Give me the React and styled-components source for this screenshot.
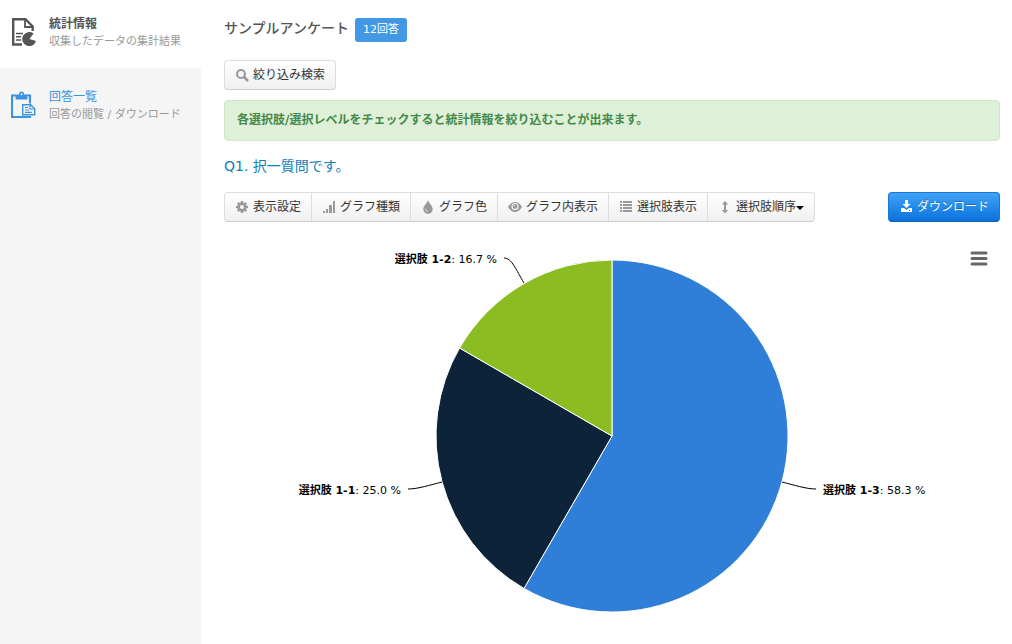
import React from "react";
import styled, { createGlobalStyle, css } from "styled-components";

const GlobalStyle = createGlobalStyle`
  * {
    box-sizing: border-box;
  }
  body {
    margin: 0;
    background: #fff;
    color: #333;
    font-family: "DejaVu Sans", "Noto Sans CJK JP", sans-serif;
    font-size: 12px;
    line-height: 20px;
  }
`;

// グラフのデータ
const slices = [
  {
    name: "選択肢 1-3",
    value: 58.3,
    from: 0,
    to: 210,
    color: "#2f7ed8",
    line: "M558 246 C570 249 582 253 592 253",
    x: 599,
    y: 258,
    anchor: "start",
  },
  {
    name: "選択肢 1-1",
    value: 25,
    from: 210,
    to: 300,
    color: "#0d233a",
    line: "M184 253 C194 253 206 249 218 246",
    x: 177,
    y: 258,
    anchor: "end",
  },
  {
    name: "選択肢 1-2",
    value: 16.7,
    from: 300,
    to: 360,
    color: "#8bbc21",
    line: "M280 22 C288 22 292 34 300 47",
    x: 273,
    y: 27,
    anchor: "end",
  },
];

const CENTER = { x: 388, y: 200 };
const RADIUS = 176;

const pointAt = (deg) => {
  const rad = (deg * Math.PI) / 180;
  return `${CENTER.x + RADIUS * Math.sin(rad)} ${CENTER.y - RADIUS * Math.cos(rad)}`;
};

const slicePath = ({ from, to }) =>
  `M${CENTER.x} ${CENTER.y} L${pointAt(from)} A${RADIUS} ${RADIUS} 0 ${
    to - from > 180 ? 1 : 0
  } 1 ${pointAt(to)} Z`;

// アイコン (14 x 14)
const icons = {
  search: (
    <>
      <circle cx="6" cy="6" r="4" fill="none" stroke="currentColor" strokeWidth="2" />
      <path d="M9 9l4 4" stroke="currentColor" strokeWidth="2.6" />
    </>
  ),
  gear: (
    <>
      <circle cx="7" cy="7" r="3.3" fill="none" stroke="currentColor" strokeWidth="2.6" />
      <path
        d="M7 1v2M7 11v2M1 7h2M11 7h2M2.8 2.8l1.4 1.4M9.8 9.8l1.4 1.4M2.8 11.2l1.4-1.4M9.8 4.2l1.4-1.4"
        stroke="currentColor"
        strokeWidth="2.4"
      />
    </>
  ),
  signal: <path d="M1 11h2v2H1zM4 9h2v4H4zM7 5h3v8H7zM11 1h2v12h-2z" />,
  tint: (
    <>
      <path d="M7 0C6.500 3 2.300 5.700 2.300 9.200a4.700 4.700 0 0 0 9.400 0C11.700 5.700 7.500 3 7 0z" />
      <path d="M4.500 8.500q0 2.600 2.200 3" fill="none" stroke="#ddd" strokeWidth="1" />
    </>
  ),
  eye: (
    <>
      <path d="M0 7Q3 2 7 2t7 5q-3 5-7 5T0 7z" />
      <circle cx="7" cy="6.500" r="3.500" fill="#f8f8f8" />
      <circle cx="7" cy="6.500" r="2.400" />
      <path d="M5.800 6.500q0-1.200 1.200-1.200" fill="none" stroke="#f8f8f8" strokeWidth="0.8" />
    </>
  ),
  list: (
    <path d="M1 1h2v2H1zM4 1h9v2H4zM1 4h2v2H1zM4 4h9v2H4zM1 7h2v2H1zM4 7h9v2H4zM1 10h2v2H1zM4 10h9v2H4z" />
  ),
  resize: <path d="M7 1l3.200 3.500H8v5.500h2.200L7 13.500 3.800 10H6V4.500H3.800z" />,
  download: (
    <>
      <path d="M6 0h3v4h2.500L7.500 8 3.500 4H6z" />
      <path d="M2 8h3l2.500 2L10 8h3v4H2z" />
      <path d="M10 10h1v1h-1z" fill="#0c74d0" />
    </>
  ),
};

const IconSvg = styled.svg`
  width: 14px;
  height: 14px;
  flex: none;
  fill: currentColor;
  color: ${(props) => props.$color || "#999"};
`;

const Icon = ({ name, color }) => (
  <IconSvg viewBox="0 0 14 14" $color={color} aria-hidden="true">
    {icons[name]}
  </IconSvg>
);

const Page = styled.div`
  display: flex;
  min-height: 100vh;
`;

// サイドバー
const Sidebar = styled.nav`
  flex: 0 0 201px;
  display: flex;
  flex-direction: column;
  gap: 5px;
  background: #f5f5f5;
`;

const MenuItem = styled.a`
  display: flex;
  gap: 12px;
  padding: 16px 11px 18px;
  text-decoration: none;
  white-space: nowrap;
  line-height: 17px;
  color: #3a93dc;
  ${(props) =>
    props.$active &&
    css`
      background: #fff;
      color: #555;
    `}
`;

const MenuIcon = styled.svg`
  width: 26px;
  height: 32px;
  flex: none;
`;

const MenuTitle = styled.div`
  font-size: 12px;
  font-weight: ${(props) => (props.$active ? 700 : 400)};
`;

const MenuText = styled.div`
  font-size: 11px;
  color: #999;
`;

const Main = styled.main`
  flex: 1;
  min-width: 0;
  padding: 18px 12px 8px 23px;
`;

const Header = styled.header`
  display: flex;
  align-items: baseline;
  gap: 6px;
  margin-bottom: 18px;
`;

const Title = styled.h1`
  margin: 0;
  font-size: 14px;
  font-weight: 500;
  line-height: 20px;
  color: #555;
`;

const Badge = styled.span`
  padding: 2px 8px;
  border-radius: 3px;
  background: #4298e5;
  color: #fff;
  font-size: 11px;
`;

const Button = styled.button`
  display: inline-flex;
  align-items: center;
  gap: 4px;
  height: 30px;
  padding: 0 10px;
  border: 1px solid #ddd;
  border-bottom-color: #ccc;
  border-radius: 4px;
  background: linear-gradient(#fff, #f0f0f0);
  color: #333;
  font: inherit;
  white-space: nowrap;
  cursor: pointer;
  ${(props) =>
    props.$primary &&
    css`
      border-color: #1a78cf #1a78cf #0f62ae;
      background: linear-gradient(#3fa2f7, #0a73dc);
      color: #fff;
      text-shadow: 0 -1px 0 rgba(0, 0, 0, 0.25);
    `}
`;

const ButtonGroup = styled.div`
  display: flex;
  & > button {
    border-radius: 0;
  }
  & > button + button {
    margin-left: -1px;
  }
  & > button:first-child {
    border-radius: 4px 0 0 4px;
  }
  & > button:last-child {
    border-radius: 0 4px 4px 0;
  }
`;

const WithCaret = styled.span`
  display: flex;
  align-items: center;
  &::after {
    content: "";
    margin-top: 2px;
    border: 4px solid transparent;
    border-top-color: #000;
    border-bottom: 0;
  }
`;

const Alert = styled.p`
  margin: 10px 0 15px;
  padding: 9px 12px 10px;
  border: 1px solid #d0e8c6;
  border-radius: 4px;
  background: #dff0d8;
  color: #468847;
  font-weight: 700;
`;

const Question = styled.h2`
  margin: 0 0 16px;
  font-size: 14px;
  font-weight: 400;
  color: #0f80b8;
`;

const Toolbar = styled.div`
  display: flex;
  justify-content: space-between;
`;

// グラフ
const Chart = styled.div`
  position: relative;
  margin-top: 14px;
`;

const ChartSvg = styled.svg`
  display: block;
  width: 100%;
  font-size: 11px;
  fill: #000;
`;

const LabelName = styled.tspan`
  font-weight: 700;
`;

const ChartMenu = styled.button`
  position: absolute;
  top: 12px;
  right: 9px;
  padding: 3px;
  border: 0;
  background: none;
  cursor: pointer;
  svg {
    display: block;
    width: 18px;
    height: 15px;
  }
`;

const toolButtons = [
  { icon: "gear", text: "表示設定" },
  { icon: "signal", text: "グラフ種類" },
  { icon: "tint", text: "グラフ色" },
  { icon: "eye", text: "グラフ内表示" },
  { icon: "list", text: "選択肢表示" },
  { icon: "resize", text: "選択肢順序", caret: true },
];

const PieChart = () => (
  <Chart>
    <ChartSvg viewBox="0 0 776 400">
      {slices.map((slice) => (
        <g key={slice.name}>
          <path d={slicePath(slice)} fill={slice.color} stroke="#fff" />
          <path d={slice.line} fill="none" stroke="#000" />
          <text x={slice.x} y={slice.y} textAnchor={slice.anchor}>
            <LabelName>{slice.name}</LabelName>
            {`: ${slice.value.toFixed(1)} %`}
          </text>
        </g>
      ))}
    </ChartSvg>
    <ChartMenu aria-label="メニュー">
      <svg viewBox="0 0 18 15">
        <path
          d="M2 2h14M2 7.500h14M2 13h14"
          stroke="#666"
          strokeWidth="3"
          strokeLinecap="round"
        />
      </svg>
    </ChartMenu>
  </Chart>
);

const App = () => {
  return (
    <Page>
      <GlobalStyle />
      <Sidebar>
        <MenuItem href="#stats" $active>
          <MenuIcon viewBox="0 0 26 32" fill="none" stroke="currentColor">
            <path d="M11 28.500H2.200V3.200h12.300l7.200 7.200V15" strokeWidth="2.400" />
            <path d="M14 3v8h8" strokeWidth="1.800" />
            <path d="M5 17.500h7M5 20.800h5M5 24h5" strokeWidth="1.600" />
            <path
              d="M18.500 23l4-5.500A7 7 0 1 0 25 25z"
              fill="currentColor"
              stroke="none"
            />
          </MenuIcon>
          <div>
            <MenuTitle $active>統計情報</MenuTitle>
            <MenuText>収集したデータの集計結果</MenuText>
          </div>
        </MenuItem>
        <MenuItem href="#answers">
          <MenuIcon viewBox="0 0 26 32" fill="none" stroke="currentColor">
            <path d="M1 6.500h18V28H1z" strokeWidth="2.200" />
            <path
              d="M4.500 10.500V8l3.500-2.500a2.500 3 0 0 1 5 0l3.500 2.500v2.500z"
              fill="currentColor"
              stroke="none"
            />
            <circle cx="10.500" cy="5.200" r="1" fill="#f5f5f5" stroke="none" />
            <path d="M10.500 14.500h10l4.500 4.500v8H10.500z" fill="#f5f5f5" stroke="none" />
            <path d="M11.700 15.700h8l4 4v6H11.700z" strokeWidth="1.400" />
            <path d="M19 16v4h4M14 18.500h3M14 21h4M14 23.400h7" strokeWidth="1.200" />
          </MenuIcon>
          <div>
            <MenuTitle>回答一覧</MenuTitle>
            <MenuText>回答の閲覧 / ダウンロード</MenuText>
          </div>
        </MenuItem>
      </Sidebar>
      <Main>
        <Header>
          <Title>サンプルアンケート</Title>
          <Badge>12回答</Badge>
        </Header>
        <Button>
          <Icon name="search" />
          絞り込み検索
        </Button>
        <Alert>各選択肢/選択レベルをチェックすると統計情報を絞り込むことが出来ます。</Alert>
        <Question>Q1. 択一質問です。</Question>
        <Toolbar>
          <ButtonGroup>
            {toolButtons.map((button) => (
              <Button key={button.icon}>
                <Icon name={button.icon} />
                {button.caret ? <WithCaret>{button.text}</WithCaret> : button.text}
              </Button>
            ))}
          </ButtonGroup>
          <Button $primary>
            <Icon name="download" color="#fff" />
            ダウンロード
          </Button>
        </Toolbar>
        <PieChart />
      </Main>
    </Page>
  );
};

export default App;
